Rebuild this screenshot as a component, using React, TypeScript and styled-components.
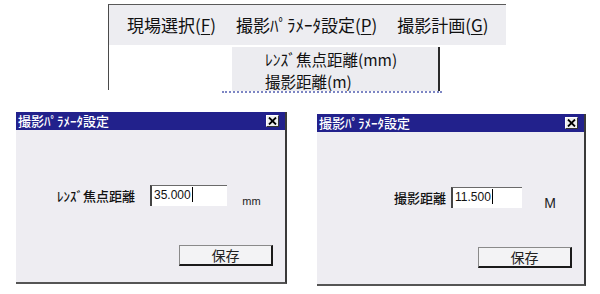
import styled, { createGlobalStyle } from "styled-components";

const GlobalStyle = createGlobalStyle`
  html, body {
    margin: 0;
    padding: 0;
    background: #ffffff;
  }
  body {
    font-family: "Noto Sans CJK JP", "Noto Sans", sans-serif;
    color: #151515;
  }
`;

const Page = styled.div`
  width: 600px;
  height: 294px;
  padding-top: 4px;
  box-sizing: border-box;
  display: flex;
  flex-direction: column;
`;

const MenuWrap = styled.div`
  position: relative;
  margin-left: 108px;
  width: 398px;
  height: 86px;
  box-sizing: border-box;
  border-top: 1px solid #5a5a5a;
  border-left: 1px solid #4a4a4a;
`;

const MenuBar = styled.div`
  height: 40px;
  background: #ededf1;
  display: flex;
  align-items: center;
  gap: 20px;
  padding-left: 18px;
  font-size: 17px;
  line-height: 20px;
  white-space: nowrap;
`;

const MenuItem = styled.span`
  color: #111;
`;

const Key = styled.span`
  text-decoration: underline;
  text-underline-offset: 2px;
`;

// dropdown opened under the 2nd menu item
const Dropdown = styled.div`
  position: absolute;
  left: 123px;
  top: 42px;
  width: 208px;
  height: 44px;
  padding: 1px 0 0 33px;
  box-sizing: border-box;
  background: #ececf0;
  border-right: 2px solid #2a2a2a;
  font-size: 15.5px;
  line-height: 22px;
  white-space: nowrap;

  &::after {
    content: "";
    position: absolute;
    left: -10px;
    right: -4px;
    bottom: -2px;
    border-bottom: 2px dotted #7d86c4;
  }
`;

const DropItem = styled.div`
  color: #111;
`;

const DialogRow = styled.div`
  display: flex;
  align-items: flex-start;
  gap: 30px;
  margin-top: 22px;
  padding-left: 16px;
`;

const Dialog = styled.div<{ $top: number; $w: number }>`
  margin-top: ${(p) => p.$top}px;
  width: ${(p) => p.$w}px;
  height: 170px;
  display: flex;
  flex-direction: column;
  background: #eeedf2;
  border-right: 2px solid #3a3a3a;
  border-bottom: 2px solid #555;
`;

const TitleBar = styled.div`
  height: 18px;
  flex: none;
  background: #22218c;
  display: flex;
  align-items: center;
  justify-content: space-between;
  padding: 0 6px 0 2px;
`;

const Title = styled.span`
  color: #ffffff;
  font-size: 13px;
  line-height: 16px;
  font-weight: 500;
  white-space: nowrap;
`;

const CloseBtn = styled.div`
  width: 13px;
  height: 12px;
  box-sizing: border-box;
  background: #efefef;
  border-top: 1px solid #ffffff;
  border-left: 1px solid #ffffff;
  border-right: 1px solid #333;
  border-bottom: 1px solid #333;
  display: flex;
  align-items: center;
  justify-content: center;
`;

const Body = styled.div`
  flex: 1;
  display: flex;
  flex-direction: column;
  padding: 55px 12px 16px 0;
`;

const Field = styled.div`
  display: grid;
  grid-template-columns: 134px auto auto;
  align-items: center;
`;

const Label = styled.span<{ $gap: number }>`
  justify-self: end;
  padding-right: ${(p) => p.$gap}px;
  font-size: 13px;
  line-height: 16px;
  font-weight: 500;
  color: #111;
  white-space: nowrap;
`;

const Input = styled.div<{ $w: number }>`
  width: ${(p) => p.$w}px;
  height: 21px;
  box-sizing: border-box;
  background: #ffffff;
  border-top: 1px solid #6a6a6a;
  border-left: 2px solid #444;
  padding: 1px 0 0 2px;
  font-family: "Liberation Sans", Arial, sans-serif;
  font-size: 12px;
  line-height: 16px;
  color: #111;
  display: flex;
`;

const Caret = styled.span`
  display: inline-block;
  width: 0;
  height: 15px;
  border-right: 1.5px solid #000;
  margin-left: 1px;
`;

const Unit = styled.span<{ $size: number; $gap: number }>`
  align-self: end;
  margin-left: ${(p) => p.$gap}px;
  margin-bottom: -2px;
  font-family: "Liberation Sans", Arial, sans-serif;
  font-size: ${(p) => p.$size}px;
  line-height: 14px;
  color: #222;
`;

const SaveButton = styled.div`
  margin-top: auto;
  align-self: flex-end;
  width: 94px;
  height: 21px;
  box-sizing: border-box;
  background: #f3f3f5;
  border-top: 1px solid #8a8a8a;
  border-left: 1px solid #8a8a8a;
  border-right: 2px solid #1a1a1a;
  border-bottom: 2px solid #1a1a1a;
  display: flex;
  align-items: center;
  justify-content: center;
  font-size: 14px;
  color: #222;
`;

function CloseIcon() {
  return (
    <svg width="9" height="8" viewBox="0 0 9 8">
      <path d="M1 0.5 L8 7.5 M8 0.5 L1 7.5" stroke="#000" strokeWidth="1.8" />
    </svg>
  );
}

type ParamDialogProps = {
  label: string;
  value: string;
  unit: string;
  unitSize: number;
  unitGap: number;
  labelGap: number;
  inputWidth: number;
  top: number;
  width: number;
};

function ParamDialog(p: ParamDialogProps) {
  return (
    <Dialog $top={p.top} $w={p.width}>
      <TitleBar>
        <Title>撮影ﾊﾟﾗﾒｰﾀ設定</Title>
        <CloseBtn>
          <CloseIcon />
        </CloseBtn>
      </TitleBar>
      <Body>
        <Field>
          <Label $gap={p.labelGap}>{p.label}</Label>
          <Input $w={p.inputWidth}>
            {p.value}
            <Caret />
          </Input>
          <Unit $size={p.unitSize} $gap={p.unitGap}>
            {p.unit}
          </Unit>
        </Field>
        <SaveButton>保存</SaveButton>
      </Body>
    </Dialog>
  );
}

export default function App() {
  return (
    <>
      <GlobalStyle />
      <Page>
        <MenuWrap>
          <MenuBar>
            <MenuItem>
              現場選択(<Key>F</Key>)
            </MenuItem>
            <MenuItem>
              撮影ﾊﾟﾗﾒｰﾀ設定(<Key>P</Key>)
            </MenuItem>
            <MenuItem>
              撮影計画(<Key>G</Key>)
            </MenuItem>
          </MenuBar>
          <Dropdown>
            <DropItem>ﾚﾝｽﾞ焦点距離(mm)</DropItem>
            <DropItem>撮影距離(m)</DropItem>
          </Dropdown>
        </MenuWrap>
        <DialogRow>
          <ParamDialog
            label="ﾚﾝｽﾞ焦点距離"
            value="35.000"
            unit="mm"
            unitSize={11}
            unitGap={3}
            labelGap={15}
            inputWidth={77}
            top={0}
            width={269}
          />
          <ParamDialog
            label="撮影距離"
            value="11.500"
            unit="M"
            unitSize={14}
            unitGap={6}
            labelGap={5}
            inputWidth={71}
            top={2}
            width={267}
          />
        </DialogRow>
      </Page>
    </>
  );
}
